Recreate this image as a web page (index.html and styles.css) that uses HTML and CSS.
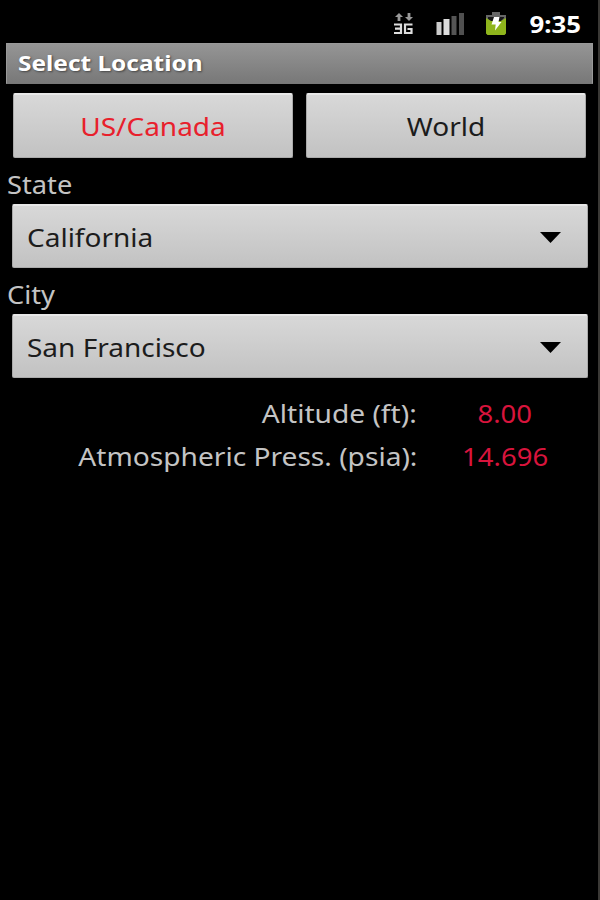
FILE: index.html
```
<!DOCTYPE html>
<html lang="en">
  <head>
    <meta charset="UTF-8" />
    <title>Select Location</title>
    <link rel="stylesheet" href="styles.css">
  </head>
  <body>
    <div class="status-bar">
      <svg class="icon-3g" width="22" height="24" viewBox="0 0 22 24">
        <g fill="#999">
          <path d="M2 5L6 1l4 4H7.400v4H4.600V5z" />
          <path d="M16 9l-4-4h2.600V1h2.800v4H20z" />
        </g>
        <g fill="none" stroke="#ddd" stroke-width="2.200">
          <path d="M1 12.500h7v8.500H1M2 16.700h6" />
          <path d="M19.500 12.500H12v8.500h6.500v-4h-4" />
        </g>
      </svg>
      <svg class="icon-signal" width="29" height="24" viewBox="0 0 29 24">
        <rect x="0.500" y="10" width="5" height="13" fill="#ccc" />
        <rect x="7.500" y="7" width="6" height="16" fill="#ddd" />
        <rect x="15.500" y="4" width="5" height="19" fill="#555" />
        <rect x="23" y="1" width="5" height="22" fill="#505050" />
      </svg>
      <svg class="icon-battery" width="22" height="25" viewBox="0 0 22 25">
        <path d="M1 4h6V1h8v3h6v6H1z" fill="#666" />
        <path d="M3 6h16v1l-4 4H7L3 8z" fill="#181818" />
        <path d="M1 7l5 3h10l5-3v15.500l-1.500 1.500h-17L1 22.500z" fill="#8fb51c" />
        <path d="M9 6h5.500l-1 5h3L10 19.500l.7-6H6.500z" fill="#fff" />
      </svg>
      <span class="clock wide">9:35</span>
    </div>
    <h1><span class="wide">Select Location</span></h1>

    <div class="tabs">
      <button class="active"><span class="wide">US/Canada</span></button>
      <button><span class="wide">World</span></button>
    </div>

    <div class="field">
      <label class="wide">State</label>
      <div class="spinner">
        <span class="wide">California</span>
        <svg width="21" height="11" viewBox="0 0 21 11"><path d="M0 0h21L10.500 11z" /></svg>
      </div>
    </div>

    <div class="field">
      <label class="wide">City</label>
      <div class="spinner">
        <span class="wide">San Francisco</span>
        <svg width="21" height="11" viewBox="0 0 21 11"><path d="M0 0h21L10.500 11z" /></svg>
      </div>
    </div>

    <div class="results">
      <span class="name wide">Altitude (ft):</span>
      <span class="value wide">8.00</span>
      <span class="name wide">Atmospheric Press. (psia):</span>
      <span class="value wide">14.696</span>
    </div>
  </body>
</html>
```
FILE: styles.css
```
* {
  box-sizing: border-box;
}
body {
  margin: 0;
  height: 900px;
  overflow: hidden;
  background-color: #000;
  border-right: 2px solid #3a3835;
  color: #c4c4c4;
  font-family: "Noto Sans", sans-serif;
  font-size: 25px;
}
/* slightly stretched lettering */
.wide {
  display: inline-block;
  transform: scaleX(1.12);
  transform-origin: left;
}
.status-bar {
  display: flex;
  align-items: center;
  height: 43px;
  padding: 4px 17px 0 393px;
}
.icon-3g {
  margin-right: 21px;
}
.icon-signal {
  margin-right: 20px;
}
.clock {
  margin-left: auto;
  color: #fff;
  font-size: 23px;
  font-weight: bold;
  transform-origin: right;
}
h1 {
  height: 41px;
  margin: 0 5px 0 6px;
  padding-left: 11px;
  border: 1px solid #999;
  border-bottom-color: #777;
  background: linear-gradient(#959595, #787878);
  color: #fff;
  font-size: 22px;
  line-height: 36px;
  text-shadow: 1px 1px 2px #444;
}
h1 .wide {
  transform: scaleX(1.11);
}
.tabs {
  display: flex;
  gap: 13px;
  margin: 9px 12px 0 13px;
}
.tabs button,
.spinner {
  height: 65px;
  border: 1px solid #aaa;
  border-top: 2px solid #e8e8e8;
  border-radius: 2px;
  background: linear-gradient(#d8d8d8, #c2c2c2);
  color: #1c1c1c;
}
.tabs button {
  flex: 1;
  padding: 0 0 1px;
  font: inherit;
}
.tabs .wide {
  transform-origin: center;
}
.tabs .active {
  color: #e8202c;
}
.field label {
  display: block;
  width: fit-content;
  height: 46px;
  margin-left: 7px;
  line-height: 52px;
  transform: scaleX(1.09);
}
.spinner {
  display: flex;
  align-items: center;
  justify-content: space-between;
  height: 64px;
  margin: 0 10px 0 12px;
  padding: 0 26px 0 14px;
}
.spinner svg {
  margin-top: 2px;
}
.results {
  display: grid;
  grid-template-columns: 417px 176px;
  grid-auto-rows: 43px;
  margin-top: 14px;
  line-height: 42px;
}
.results .name {
  justify-self: end;
  transform: scaleX(1.125);
  transform-origin: right;
}
.results .value {
  justify-self: center;
  color: #d8143c;
  transform: scaleX(1.1);
  transform-origin: center;
}
```
